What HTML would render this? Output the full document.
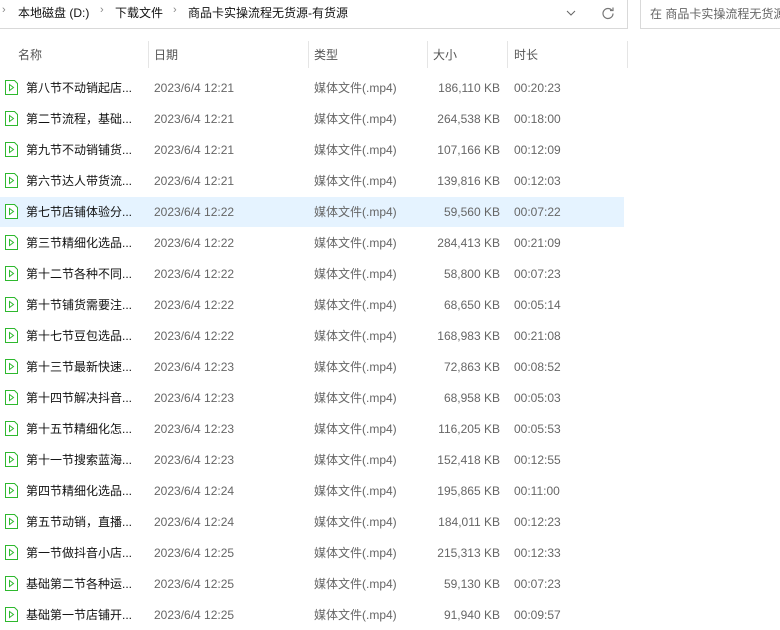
<!DOCTYPE html><html><head><meta charset="utf-8"><style>
body{margin:0;width:780px;height:615px;background:#fff;overflow:hidden;position:relative;font-family:"Liberation Sans","Noto Sans CJK SC",sans-serif;font-size:12px;}
.a{position:absolute;white-space:nowrap}
.r{position:absolute;left:0;width:624px;height:30px}
.r span{position:absolute;top:7px;line-height:16px}
.n{left:26px;color:#111}.d{left:154px;color:#666}.t{left:314px;color:#666}.s{right:124px;color:#666}.u{left:514px;color:#666}
.ic{position:absolute;left:5px;top:7px;width:13px;height:15px}
.h{position:absolute;top:46px;color:#555;font-size:12px}
.v{position:absolute;top:41px;width:1px;height:27px;background:#e5e5e5}
</style></head><body>
<div class="a" style="left:0;top:0;width:628px;height:29px;border-right:1px solid #d9d9d9;border-bottom:1px solid #d9d9d9;box-sizing:border-box"></div>
<div class="a" style="left:640px;top:-1px;width:150px;height:30px;border:1px solid #d9d9d9;box-sizing:border-box"></div>
<div class="a" style="left:2px;top:4px;color:#888;font-size:11px">›</div>
<div class="a" style="left:18px;top:4px;color:#111">本地磁盘 (D:)</div>
<div class="a" style="left:100px;top:4px;color:#888;font-size:11px">›</div>
<div class="a" style="left:115px;top:4px;color:#111">下载文件</div>
<div class="a" style="left:173px;top:4px;color:#888;font-size:11px">›</div>
<div class="a" style="left:188px;top:4px;color:#111">商品卡实操流程无货源-有货源</div>
<svg class="a" style="left:566px;top:9px" width="10" height="8"><path d="M1 2l4 4 4-4" fill="none" stroke="#666" stroke-width="1"/></svg>
<svg class="a" style="left:601px;top:6px" width="14" height="14"><path d="M11 4.5A5 5 0 1 0 12 7.5" fill="none" stroke="#777" stroke-width="1.2"/><path d="M9 4.5h3v-3" fill="none" stroke="#777" stroke-width="1.2"/></svg>
<div class="a" style="left:650px;top:5px;color:#666">在 商品卡实操流程无货源</div>
<div class="h" style="left:18px">名称</div><div class="h" style="left:154px">日期</div><div class="h" style="left:314px">类型</div><div class="h" style="left:433px">大小</div><div class="h" style="left:514px">时长</div>
<div class="v" style="left:148px"></div><div class="v" style="left:308px"></div><div class="v" style="left:427px"></div><div class="v" style="left:507px"></div><div class="v" style="left:627px"></div>
<div id="rows"></div>
<script>
var D=[["第八节不动销起店...","12:21","186,110","00:20:23"],["第二节流程，基础...","12:21","264,538","00:18:00"],["第九节不动销铺货...","12:21","107,166","00:12:09"],["第六节达人带货流...","12:21","139,816","00:12:03"],["第七节店铺体验分...","12:22","59,560","00:07:22"],["第三节精细化选品...","12:22","284,413","00:21:09"],["第十二节各种不同...","12:22","58,800","00:07:23"],["第十节铺货需要注...","12:22","68,650","00:05:14"],["第十七节豆包选品...","12:22","168,983","00:21:08"],["第十三节最新快速...","12:23","72,863","00:08:52"],["第十四节解决抖音...","12:23","68,958","00:05:03"],["第十五节精细化怎...","12:23","116,205","00:05:53"],["第十一节搜索蓝海...","12:23","152,418","00:12:55"],["第四节精细化选品...","12:24","195,865","00:11:00"],["第五节动销，直播...","12:24","184,011","00:12:23"],["第一节做抖音小店...","12:25","215,313","00:12:33"],["基础第二节各种运...","12:25","59,130","00:07:23"],["基础第一节店铺开...","12:25","91,940","00:09:57"]];
var h="";D.forEach(function(r,i){var y=73+31*i;h+='<div class="r" style="top:'+y+'px;'+(i==4?'background:#e5f3ff':'')+'"><svg class="ic" viewBox="0 0 13 15"><path d="M0.5 0.5h9l3 3v11h-12z" fill="#fff" stroke="#2eb82e"/><path d="M4.5 4.5l4 3-4 3z" fill="none" stroke="#2eb82e"/></svg><span class="n">'+r[0]+'</span><span class="d">2023/6/4 '+r[1]+'</span><span class="t">媒体文件(.mp4)</span><span class="s">'+r[2]+' KB</span><span class="u">'+r[3]+'</span></div>'});
document.getElementById("rows").innerHTML=h;
</script>
</body></html>
